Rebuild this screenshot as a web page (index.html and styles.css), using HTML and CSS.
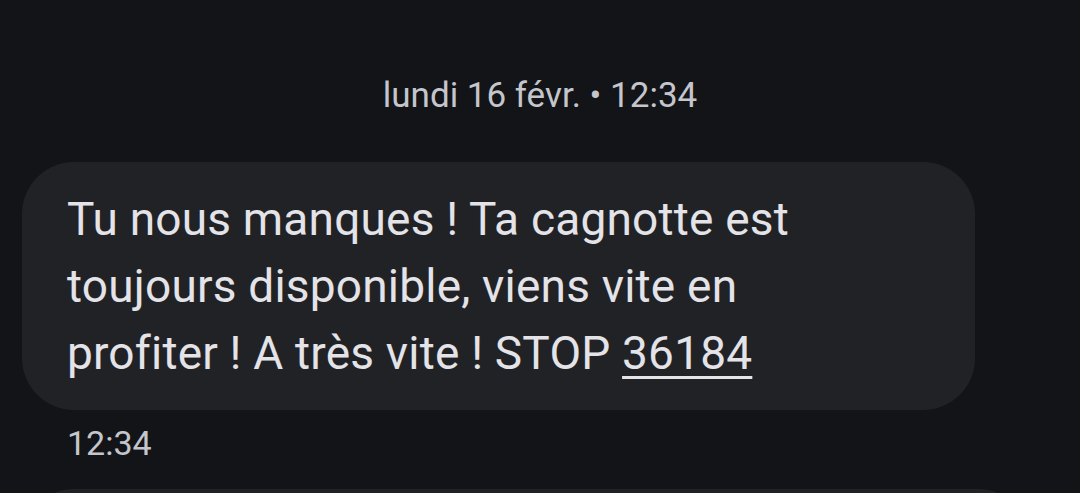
FILE: index.html
```html
<!DOCTYPE html>
<html lang="fr">
<head>
    <meta charset="UTF-8">
    <meta name="viewport" content="width=device-width, initial-scale=1.0">
    <title>Messages</title>
    <link rel="stylesheet" href="styles.css">
</head>
<body>
    <div class="thread">
        <div class="day-header">lundi 16 févr. • 12:34</div>

        <div class="message incoming">
            <div class="bubble">
                Tu nous manques ! Ta cagnotte est<br>
                toujours disponible, viens vite en<br>
                profiter ! A très vite ! STOP <a class="short-code" href="#">36184</a>
            </div>
            <div class="time">12:34</div>
        </div>

        <div class="message incoming">
            <div class="bubble bubble-next"></div>
        </div>
    </div>
</body>
</html>
```

FILE: styles.css
```css
html, body {
    margin: 0;
    padding: 0;
    height: 100%;
    overflow: hidden;
}
body {
    background-color: #131418;
    font-family: Roboto, "Noto Sans", Arial, sans-serif;
    color: #e3e3e8;
}
.thread {
    display: flex;
    flex-direction: column;
    padding: 76px 0 0 22px;
}
.day-header {
    text-align: center;
    margin-left: -22px;
    font-size: 35px;
    line-height: 40px;
    color: #c4c6cc;
    margin-bottom: 46px;
}
.message {
    display: flex;
    flex-direction: column;
    align-items: flex-start;
}
.bubble {
    box-sizing: border-box;
    width: 953px;
    padding: 24px 40px 23px 45px;
    background-color: #212226;
    border-radius: 52px;
    font-size: 46px;
    line-height: 67px;
    letter-spacing: 0.2px;
}
.short-code {
    color: inherit;
    text-decoration: underline;
    text-decoration-thickness: 3px;
    text-underline-offset: 7px;
}
.time {
    margin: 13px 0 26px 45px;
    font-size: 34px;
    line-height: 40px;
    color: #c4c6cc;
}
.bubble-next {
    width: 1008px;
    height: 120px;
}
```
